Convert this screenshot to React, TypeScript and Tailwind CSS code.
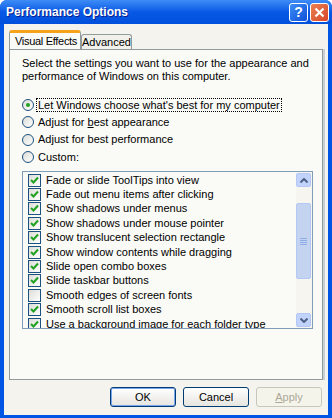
import React from 'react'

const items: { label: string; checked: boolean }[] = [
  { label: 'Fade or slide ToolTips into view', checked: true },
  { label: 'Fade out menu items after clicking', checked: true },
  { label: 'Show shadows under menus', checked: true },
  { label: 'Show shadows under mouse pointer', checked: true },
  { label: 'Show translucent selection rectangle', checked: true },
  { label: 'Show window contents while dragging', checked: true },
  { label: 'Slide open combo boxes', checked: true },
  { label: 'Slide taskbar buttons', checked: true },
  { label: 'Smooth edges of screen fonts', checked: false },
  { label: 'Smooth scroll list boxes', checked: true },
  { label: 'Use a background image for each folder type', checked: true },
]

function Radio({ on }: { on?: boolean }) {
  return (
    <span className="w-[12px] h-[12px] rounded-full border border-[#1C5180] bg-gradient-to-br from-[#DCDCD7] to-white flex items-center justify-center shrink-0">
      {on && <span className="w-[4px] h-[4px] rounded-full bg-[#21A121]" />}
    </span>
  )
}

function Check({ on }: { on: boolean }) {
  return (
    <span className="w-[13px] h-[13px] border border-[#1C5180] bg-gradient-to-br from-[#DCDCD7] to-white flex items-center justify-center shrink-0">
      {on && (
        <svg width="9" height="9" viewBox="0 0 9 9">
          <path d="M1 4 L3.5 6.5 L8 1.5" fill="none" stroke="#21A121" strokeWidth="2" />
        </svg>
      )}
    </span>
  )
}

function Arrow({ up }: { up?: boolean }) {
  return (
    <div className="h-[14px] w-full rounded-[2px] border border-[#B4C8F6] bg-[#C1D3FB] flex items-center justify-center">
      <svg width="8" height="5" viewBox="0 0 8 5">
        <path d={up ? 'M0.5 4.5 L4 1 L7.5 4.5' : 'M0.5 0.5 L4 4 L7.5 0.5'} fill="none" stroke="#4D6185" strokeWidth="2" />
      </svg>
    </div>
  )
}

export default function App() {
  return (
    <div
      className="w-[332px] h-[418px] flex flex-col bg-[#0055E5] rounded-t-[7px] overflow-hidden text-black"
      style={{ fontFamily: 'Tahoma, "Liberation Sans", Arial, sans-serif' }}
    >
      {/* title bar */}
      <div className="h-[24px] shrink-0 flex items-center pl-[6px] pr-[3px] bg-gradient-to-b from-[#3D8CF6] via-[#0858E6] to-[#0050DC]">
        <span className="flex-1 text-white font-bold text-[12px] [text-shadow:1px_1px_0_#0A1E8C]">
          Performance Options
        </span>
        <div className="flex gap-[2px]">
          <div className="w-[19px] h-[19px] rounded-[3px] border border-white bg-gradient-to-br from-[#3D8CF6] to-[#1150D8] flex items-center justify-center text-white font-bold text-[14px] leading-none">
            ?
          </div>
          <div className="w-[19px] h-[19px] rounded-[3px] border border-white bg-gradient-to-br from-[#E8804F] to-[#D9432A] flex items-center justify-center">
            <svg width="11" height="11" viewBox="0 0 11 11">
              <path d="M1.5 1.5 L9.5 9.5 M9.5 1.5 L1.5 9.5" stroke="white" strokeWidth="2.2" />
            </svg>
          </div>
        </div>
      </div>

      {/* body */}
      <div className="flex-1 mx-[4px] mb-[3px] bg-[#F4F3EE] flex flex-col pt-[7px] px-[5px] text-[11px] leading-[13px]">
        {/* tabs */}
        <div className="flex items-end h-[18px] relative z-10 whitespace-nowrap">
          <div className="h-[19px] w-[72px] bg-[#FAFAF6] border-x border-[#919B9C] border-t-[3px] border-t-[#F6A21B] rounded-t-[3px] flex items-center pl-[5px] tracking-[-0.3px]">
            Visual Effects
          </div>
          <div className="h-[15px] w-[51px] bg-[#F1F0EA] border border-b-0 border-[#919B9C] rounded-t-[3px] flex items-center justify-center">
            Advanced
          </div>
        </div>

        {/* panel */}
        <div className="h-[331px] w-[314px] bg-[#FAFAF6] border border-[#919B9C] shadow-[2px_0_0_#C9D1D6] px-[12px] pt-[7px] flex flex-col">
          <p className="leading-[13px]">
            Select the settings you want to use for the appearance and
            <br />
            performance of Windows on this computer.
          </p>

          <div className="mt-[13px] flex flex-col">
            <div className="h-[17.5px] flex items-center gap-[3px]">
              <Radio on />
              <span className="outline-1 outline-dotted outline-black px-[1px] leading-[12px]">
                Let Windows choose what's best for my computer
              </span>
            </div>
            <div className="h-[17.5px] flex items-center gap-[4px]">
              <Radio />
              <span>
                Adjust for <u>b</u>est appearance
              </span>
            </div>
            <div className="h-[17.5px] flex items-center gap-[4px]">
              <Radio />
              <span>Adjust for best performance</span>
            </div>
            <div className="h-[17.5px] flex items-center gap-[4px]">
              <Radio />
              <span>Custom:</span>
            </div>
          </div>

          {/* list */}
          <div className="mt-[5px] h-[158px] w-[291px] border border-[#7F9DB9] bg-[#FAFAF6] flex overflow-hidden">
            <div className="flex-1 pl-[5px] pt-[1px] overflow-hidden">
              {items.map((it) => (
                <div key={it.label} className="h-[14.4px] flex items-center gap-[5px] whitespace-nowrap">
                  <Check on={it.checked} />
                  <span>{it.label}</span>
                </div>
              ))}
            </div>
            <div className="w-[16px] shrink-0 bg-[#F6F5F0] flex flex-col py-[1px] pr-[1px]">
              <Arrow up />
              <div className="flex-1 flex flex-col pt-[16px] pb-[34px]">
                <div className="flex-1 rounded-[2px] border border-[#B4C8F6] bg-[#C4D3F0] flex items-center justify-center">
                  <div className="flex flex-col gap-[1px]">
                    <span className="w-[7px] h-[1px] bg-[#8EACE8]" />
                    <span className="w-[7px] h-[1px] bg-[#8EACE8]" />
                    <span className="w-[7px] h-[1px] bg-[#8EACE8]" />
                    <span className="w-[7px] h-[1px] bg-[#8EACE8]" />
                  </div>
                </div>
              </div>
              <Arrow />
            </div>
          </div>
        </div>

        {/* buttons */}
        <div className="mt-[7px] flex justify-end gap-[7px] pr-[1px]">
          <button className="w-[66px] h-[20px] rounded-[3px] border border-[#003C74] bg-gradient-to-b from-white to-[#E6E5DF] shadow-[inset_0_0_0_1px_#7AA5EE]">
            OK
          </button>
          <button className="w-[66px] h-[20px] rounded-[3px] border border-[#003C74] bg-gradient-to-b from-white to-[#E6E5DF]">
            Cancel
          </button>
          <button className="w-[66px] h-[20px] rounded-[3px] border border-[#C9C7BA] bg-[#F5F4EA] text-[#ACA899]">
            <u>A</u>pply
          </button>
        </div>
      </div>
    </div>
  )
}
